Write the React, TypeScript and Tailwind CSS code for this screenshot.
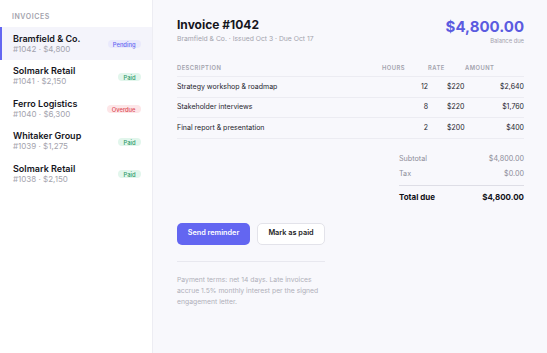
const invoices = [
  { name: "Bramfield & Co.", meta: "#1042 · $4,800", status: "Pending", active: true },
  { name: "Solmark Retail", meta: "#1041 · $2,150", status: "Paid" },
  { name: "Ferro Logistics", meta: "#1040 · $6,300", status: "Overdue" },
  { name: "Whitaker Group", meta: "#1039 · $1,275", status: "Paid" },
  { name: "Solmark Retail", meta: "#1038 · $2,150", status: "Paid" },
];

const lines = [
  { desc: "Strategy workshop & roadmap", hours: 12, rate: "$220", amount: "$2,640" },
  { desc: "Stakeholder interviews", hours: 8, rate: "$220", amount: "$1,760" },
  { desc: "Final report & presentation", hours: 2, rate: "$200", amount: "$400" },
];

const badgeStyles: Record<string, string> = {
  Pending: "bg-[#e9e9fc] text-[#6366f1]",
  Paid: "bg-[#e2f6ec] text-[#2f9c6a]",
  Overdue: "bg-[#fde6e8] text-[#dc4a55]",
};

function Badge({ status }: { status: string }) {
  return (
    <span className={`rounded-full px-[5px] py-[0.5px] text-[5.8px] leading-[7px] font-medium ${badgeStyles[status]}`}>
      {status}
    </span>
  );
}

export default function App() {
  return (
    <div className="flex h-[353px] w-[547px] overflow-hidden bg-[#f8f8fc] font-['Inter',sans-serif]">
      <aside className="w-[153px] shrink-0 border-r border-[#ededf3] bg-white">
        <div className="px-3 pt-[12px] pb-[6px] text-[7px] leading-[9px] font-semibold tracking-[0.08em] text-[#a3a3ad]">
          INVOICES
        </div>
        <ul>
          {invoices.map((inv, i) => (
            <li
              key={i}
              className={`flex h-[32.5px] items-end justify-between py-[6px] pr-[11.5px] ${
                inv.active ? "border-l-2 border-[#6366f1] bg-[#f4f4fb] pl-[11px]" : "pl-[13px]"
              }`}
            >
              <div>
                <div className="text-[9px] leading-[11px] font-semibold text-[#16161d]">{inv.name}</div>
                <div className="text-[8px] leading-[10px] text-[#a3a3ad]">{inv.meta}</div>
              </div>
              <div className="mb-[1px]">
                <Badge status={inv.status} />
              </div>
            </li>
          ))}
        </ul>
      </aside>

      <main className="flex-1 pt-[17px] pr-[23px] pl-6">
        <div className="flex items-start justify-between">
          <div>
            <h1 className="text-[12px] leading-[16px] font-bold text-[#16161d]">Invoice #1042</h1>
            <p className="mt-[1px] text-[6.8px] leading-[10px] text-[#a3a3ad]">
              Bramfield &amp; Co. · Issued Oct 3 · Due Oct 17
            </p>
          </div>
          <div className="pt-[1px] text-right">
            <div className="text-[15px] leading-[18px] font-bold text-[#5b5be0]">$4,800.00</div>
            <div className="mt-[1px] text-[5.8px] leading-[8px] text-[#a3a3ad]">Balance due</div>
          </div>
        </div>

        <div className="mt-[19px]">
          <div className="flex border-b border-[#ececf2] pb-[4px] text-[5.8px] leading-[8px] font-semibold tracking-[0.08em] text-[#a3a3ad]">
            <div className="flex-1">DESCRIPTION</div>
            <div className="w-[46px]">HOURS</div>
            <div className="w-[37px]">RATE</div>
            <div className="w-[59px]">AMOUNT</div>
          </div>
          {lines.map((l, i) => (
            <div
              key={i}
              className="flex h-[20.7px] items-center border-b border-[#ececf2] text-[7px] text-[#24242c]"
            >
              <div className="flex-1">{l.desc}</div>
              <div className="w-[46px] text-right">{l.hours}</div>
              <div className="w-[37px] pl-[19px]">{l.rate}</div>
              <div className="w-[59px] text-right">{l.amount}</div>
            </div>
          ))}
        </div>

        <div className="mt-[13px] ml-auto w-[125px] text-[7.2px]">
          <div className="flex h-[15px] items-center justify-between text-[#8c8c98]">
            <span>Subtotal</span>
            <span>$4,800.00</span>
          </div>
          <div className="flex h-[15px] items-center justify-between text-[#8c8c98]">
            <span>Tax</span>
            <span>$0.00</span>
          </div>
          <div className="mt-[2.5px] flex h-[24px] items-center justify-between border-t border-[#dedee6] text-[8px] font-bold text-[#111118]">
            <span>Total due</span>
            <span>$4,800.00</span>
          </div>
        </div>

        <div className="mt-[14px] w-[148px]">
          <div className="flex gap-[7px]">
            <button className="h-[22px] w-[73px] rounded-[5px] bg-[#6366f1] text-[7.3px] font-semibold text-white">
              Send reminder
            </button>
            <button className="h-[22px] w-[68px] rounded-[5px] border border-[#e3e3ea] bg-white text-[7.3px] font-semibold text-[#1c1c24]">
              Mark as paid
            </button>
          </div>
          <div className="mt-[16px] border-t border-[#e8e8ef]" />
          <p className="mt-[12px] text-[6.8px] leading-[11px] text-[#b0b0ba]">
            Payment terms: net 14 days. Late invoices accrue 1.5% monthly interest per the signed engagement letter.
          </p>
        </div>
      </main>
    </div>
  );
}
